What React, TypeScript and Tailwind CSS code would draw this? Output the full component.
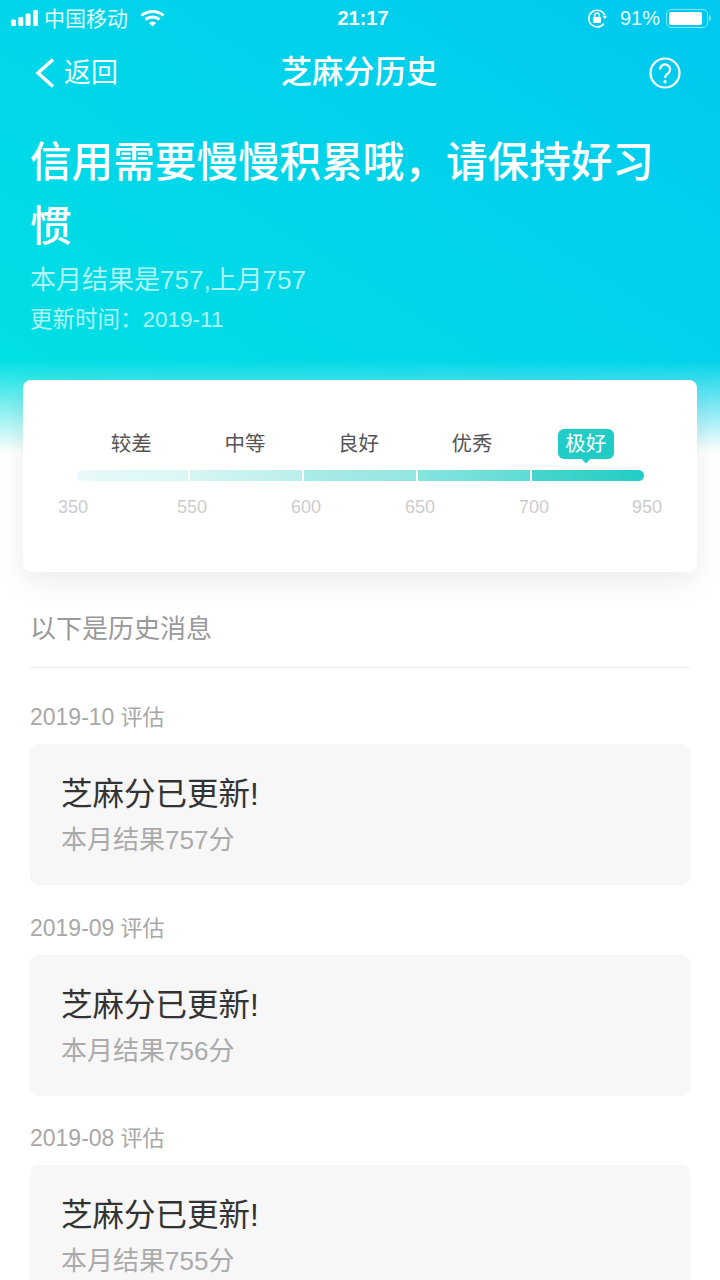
const FONT = "font-['Helvetica_Neue','Liberation_Sans','Noto_Sans_CJK_SC',sans-serif]"

const levels = ['较差', '中等', '良好', '优秀', '极好']
const scores = ['350', '550', '600', '650', '700', '950']
const segments = [
  'w-[111px] rounded-l-full from-[#e8f9f9] to-[#d9f6f5]',
  'w-[112px] from-[#d5f5f3] to-[#b9efec]',
  'w-[112px] from-[#a9ebe7] to-[#93e6e1]',
  'w-[112px] from-[#86e4de] to-[#5cdcd5]',
  'w-[112px] rounded-r-full from-[#45d6ce] to-[#1fcdc5]',
]
const history = [
  { date: '2019-10', score: 757 },
  { date: '2019-09', score: 756 },
  { date: '2019-08', score: 755 },
]

function StatusBar() {
  return (
    <div className="flex h-[36px] items-center justify-between pl-[11px] pr-[9px] text-white">
      <div className="flex w-[240px] items-center">
        <svg width="28" height="16" viewBox="0 0 28 16" fill="#fff">
          <rect x="0" y="9.500" width="5" height="6.500" rx="1.500" />
          <rect x="7.300" y="7" width="5" height="9" rx="1.500" />
          <rect x="14.600" y="3.500" width="5" height="12.500" rx="1.500" />
          <rect x="22" y="0" width="5" height="16" rx="1.500" />
        </svg>
        <span className="ml-[5px] text-[21px] leading-none text-white/90">中国移动</span>
        <svg className="ml-[12px]" width="25" height="18" viewBox="0 0 25 18" fill="none" stroke="#fff" strokeWidth="3">
          <path d="M1.500 6.500C7.500 1 17.500 1 23.500 6.500" />
          <path d="M5.500 10.500C9.500 7 15.500 7 19.500 10.500" />
          <path d="M12.500 17.500L8.800 13.800C10.800 12.300 14.200 12.300 16.200 13.800Z" fill="#fff" stroke="none" />
        </svg>
      </div>
      <span className="ml-[4px] text-[20px] font-semibold leading-none">21:17</span>
      <div className="flex w-[240px] items-center justify-end">
        <svg width="20" height="20" viewBox="0 0 20 20" fill="none">
          <path d="M18 7.500A8.400 8.400 0 1 0 17 15.500" stroke="#fff" strokeWidth="1.500" />
          <path d="M15.500 8H20L17.800 11Z" fill="#fff" />
          <rect x="6" y="9" width="8" height="6" rx="1" fill="#fff" />
          <path d="M7.700 9V7.300a2.300 2.300 0 0 1 4.600 0V9" stroke="#fff" strokeWidth="1.300" />
        </svg>
        <span className="ml-[13px] mr-[-1px] text-[20px] leading-none text-white/90">91%</span>
        <div className="ml-[7px] flex h-[19px] w-[42px] items-center rounded-[5px] border border-white/50 p-[2px]">
          <div className="h-full w-[33px] rounded-[2px] bg-white" />
        </div>
        <div className="ml-[1px] h-[6px] w-[2px] rounded-r-full bg-white/50" />
      </div>
    </div>
  )
}

function NavBar() {
  return (
    <div className="mt-[14px] flex h-[46px] items-center justify-between pl-[35px] pr-[39px] text-white">
      <div className="flex w-[150px] items-center">
        <svg width="20" height="30" viewBox="0 0 20 30" fill="none" stroke="#fff" strokeWidth="3.500">
          <path d="M18 1.500L3 15L18 28.500" />
        </svg>
        <span className="ml-[9px] text-[27px] leading-none text-white/95">返回</span>
      </div>
      <span className="ml-[2px] text-[31.300px] font-medium leading-none">芝麻分历史</span>
      <div className="flex w-[150px] justify-end">
        <svg width="32" height="32" viewBox="0 0 32 32" fill="none" stroke="#fff" strokeWidth="2.200">
          <circle cx="16" cy="16" r="14.500" />
          <path d="M11 12.500a5 5 0 1 1 7.800 4.100c-1.800 1.200-2.800 2.200-2.800 4.400" />
          <circle cx="16" cy="24.800" r="0.600" />
        </svg>
      </div>
    </div>
  )
}

function ScoreCard() {
  return (
    <div className="relative mx-[23px] mt-[-72px] h-[192px] rounded-[8px] bg-white pl-[54px] pt-[49px] shadow-[0_10px_30px_rgba(0,0,0,0.08)]">
      <div className="flex h-[30px] w-[567px] text-[20.500px] text-[#555]">
        {levels.map((level, i) => (
          <div key={level} className={`flex flex-1 items-center justify-center ${i === 4 ? 'pr-[4px]' : 'pr-[5px]'}`}>
            {i === 4 ? (
              <span className="relative flex h-[30px] w-[56px] items-center justify-center rounded-[6px] bg-[#22ccc6] text-white">
                {level}
                <span className="absolute bottom-[-3px] left-1/2 size-[7px] -translate-x-1/2 rotate-45 bg-[#22ccc6]" />
              </span>
            ) : (
              <span className="leading-none">{level}</span>
            )}
          </div>
        ))}
      </div>
      <div className="mt-[11px] flex h-[11px] w-[567px] gap-[2px]">
        {segments.map((segment) => (
          <div key={segment} className={`h-full bg-gradient-to-r ${segment}`} />
        ))}
      </div>
      <div className="ml-[-20px] mt-[17px] grid grid-cols-[119px_114px_114px_114px_113px_32px] text-[18px] leading-none text-[#ccc]">
        {scores.map((score) => (
          <span key={score} className="w-[32px] text-center">{score}</span>
        ))}
      </div>
    </div>
  )
}

function HistoryItem({ date, score }: { date: string; score: number }) {
  return (
    <div className="mb-[16.500px]">
      <div className="h-[53px] text-[22px] leading-[53px] text-[#a8a8a8]">
        <span className="text-[23px]">{date}</span> 评估
      </div>
      <div className="h-[141px] rounded-[8px] bg-[#f7f7f7] pl-[31px] pt-[30px]">
        <div className="text-[31.500px] leading-[40px] text-[#333]">芝麻分已更新!</div>
        <div className="mt-[10px] text-[26px] leading-[32px] text-[#aaa]">本月结果{score}分</div>
      </div>
    </div>
  )
}

export default function App() {
  return (
    <div className={`h-[1280px] overflow-hidden bg-white ${FONT}`}>
      <div className="h-[452px] bg-gradient-to-tr from-[#00e2e2] to-[#00c8f0]">
        <div className="h-[360px]">
          <StatusBar />
          <NavBar />
          <div className="px-[30px] pt-[35px] text-white">
            <h1 className="text-[41.600px] font-medium leading-[64px]">信用需要慢慢积累哦，请保持好习惯</h1>
            <p className="mt-[5px] text-[26px] leading-[32px] text-white/70">本月结果是757,上月757</p>
            <p className="mt-[10px] text-[22.500px] leading-[28px] text-white/70">更新时间：2019-11</p>
          </div>
        </div>
        <div className="h-[92px] bg-gradient-to-b from-transparent to-white" />
      </div>
      <ScoreCard />
      <div className="px-[30px]">
        <div className="mt-[38px] h-[58px] border-b border-[#eee] text-[26px] leading-[38px] text-[#999]">以下是历史消息</div>
        <div className="pt-[23px]">
          {history.map((item) => (
            <HistoryItem key={item.date} date={item.date} score={item.score} />
          ))}
        </div>
      </div>
    </div>
  )
}
